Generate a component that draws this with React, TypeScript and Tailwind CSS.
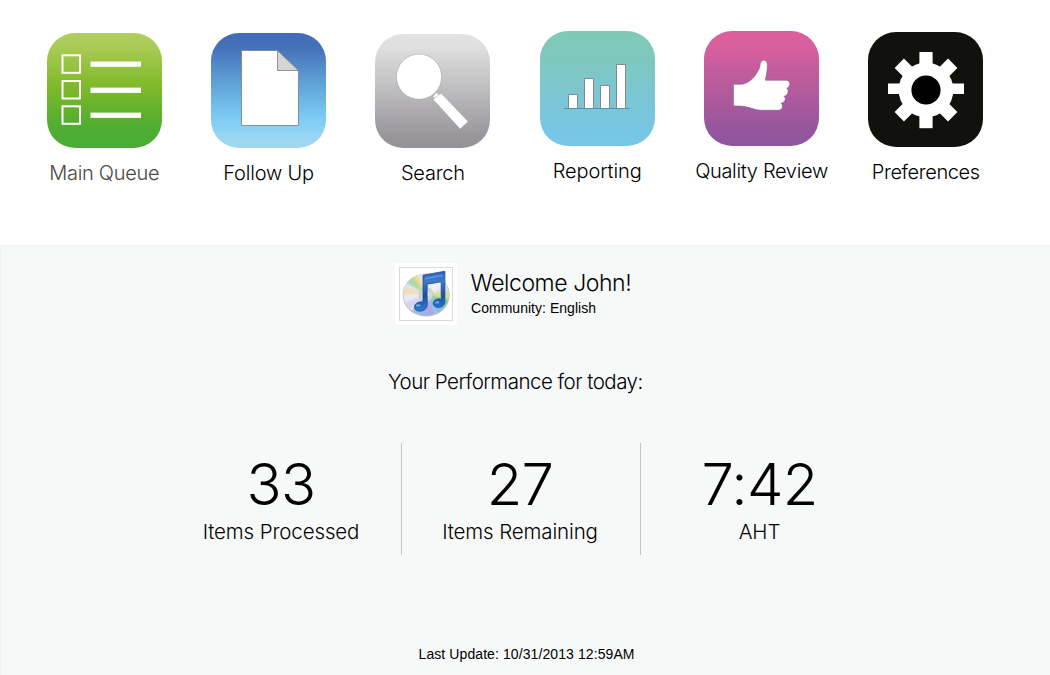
import type { ReactNode } from "react";

type Tile = {
  id: string;
  label: string;
  stops: [string, string][];
  height: number;
  column: string;
  text: string;
  glyph: ReactNode;
};

const tiles: Tile[] = [
  {
    id: "queue",
    label: "Main Queue",
    stops: [["0", "#b1ce5f"], ["0.12", "#a9cb55"], ["0.47", "#7fb928"], ["0.8", "#50ae32"], ["1", "#4aac34"]],
    height: 115,
    column: "pt-[33px]",
    text: "text-[#4a4745] tracking-[-0.3px]",
    glyph: (
      <>
        <g fill="none" stroke="#fff" strokeWidth="2">
          <rect x="15.5" y="22.3" width="17.5" height="17.5" />
          <rect x="15.5" y="48" width="17.5" height="17.5" />
          <rect x="15.5" y="73.3" width="17.5" height="17.5" />
        </g>
        <g fill="#fff">
          <rect x="43.5" y="28.5" width="50.5" height="5.3" />
          <rect x="43.5" y="54.6" width="50.5" height="5.3" />
          <rect x="43.5" y="79.6" width="50.5" height="5.3" />
        </g>
      </>
    ),
  },
  {
    id: "follow",
    label: "Follow Up",
    stops: [["0", "#426cb5"], ["0.12", "#4470b8"], ["0.4", "#5c9cd4"], ["0.74", "#7cccf5"], ["0.9", "#97d6f2"], ["1", "#a0d8ef"]],
    height: 115,
    column: "pt-[33px]",
    text: "text-black tracking-[-0.2px]",
    glyph: (
      <g stroke="#777b80" strokeWidth="0.8">
        <path d="M30.5 17.5H66.8L87.5 38.5V92.5H30.5Z" fill="#fff" />
        <path d="M66.5 17.5V37.5H87.5Z" fill="#d5d5d5" />
      </g>
    ),
  },
  {
    id: "search",
    label: "Search",
    stops: [["0", "#e2e2e2"], ["0.12", "#dfdfdf"], ["0.6", "#b4b2b5"], ["0.9", "#98969b"], ["1", "#949297"]],
    height: 114,
    column: "pt-[34px]",
    text: "text-black tracking-[-0.2px]",
    glyph: (
      <g fill="#fff" stroke="#98989a" strokeWidth="0.5">
        <circle cx="44" cy="42.7" r="22.6" />
        <path d="M57.8 62.4L61.6 58.6L64.6 61.4L60.4 65.3Z" />
        <path d="M58 65.4L66 59L93.2 87.4L85.2 95.1Z" />
      </g>
    ),
  },
  {
    id: "reporting",
    label: "Reporting",
    stops: [["0", "#80c8b6"], ["0.15", "#80c8b9"], ["0.5", "#7cc6cf"], ["0.85", "#78c6e4"], ["1", "#77c7e9"]],
    height: 115,
    column: "pt-[31px]",
    text: "text-black tracking-[-0.1px]",
    glyph: (
      <g fill="#fff" stroke="#86888b" strokeWidth="1">
        <path d="M28.5 77.5V63.5H37.5V77.5" />
        <path d="M44.5 77.5V47.5H53.5V77.5" />
        <path d="M60.5 77.5V54.5H69.5V77.5" />
        <path d="M76.5 77.5V33.5H85.5V77.5" />
        <path d="M24 77.5H90" stroke="#5d8f9c" />
      </g>
    ),
  },
  {
    id: "quality",
    label: "Quality Review",
    stops: [["0", "#dc5f9d"], ["0.12", "#d95f9d"], ["0.5", "#b65b9c"], ["0.85", "#96569d"], ["1", "#8e559e"]],
    height: 115,
    column: "pt-[31px]",
    text: "text-black tracking-[-0.33px]",
    glyph: (
      <path
        d="M29.5 53.3H36.5C43.5 53.3 49.5 47.5 52.5 42.5C55.5 38 56 35.5 56.4 32.5C56.9 28.3 62.5 27.8 63.2 32.5C63.9 37.5 62.2 44.5 61.4 49.3H82C86.5 49.3 87.2 55.5 82.8 57.3C85 58.8 84.6 64.2 80 65.3C82.3 67 81.6 71.2 77.2 72.1C79.3 74.3 78.8 79.2 74.5 79.2H57C49.5 79.2 44.5 75 36 75H29.5Z"
        fill="#fff"
        stroke="#7d4f83"
        strokeWidth="0.5"
      />
    ),
  },
  {
    id: "preferences",
    label: "Preferences",
    stops: [["0", "#11120d"], ["1", "#11120d"]],
    height: 115,
    column: "pt-[32px]",
    text: "text-black tracking-[-0.4px]",
    glyph: (
      <>
        <g fill="#fff">
          <circle cx="58" cy="58" r="27.4" />
          <rect x="51.4" y="20" width="13.2" height="76.2" />
          <rect x="20" y="51.5" width="76" height="10.5" />
          <rect x="51.4" y="20.2" width="13.2" height="75.6" transform="rotate(45 58 58)" />
          <rect x="51.4" y="20.2" width="13.2" height="75.6" transform="rotate(-45 58 58)" />
        </g>
        <circle cx="58" cy="58" r="14.6" fill="#000" />
      </>
    ),
  },
];

const stats = [
  { value: "33", label: "Items Processed" },
  { value: "27", label: "Items Remaining" },
  { value: "7:42", label: "AHT" },
];

function AppTile({ tile }: { tile: Tile }) {
  return (
    <div className={`flex w-[115px] flex-col items-center ${tile.column}`}>
      <svg width="115" height={tile.height} viewBox={`0 0 115 ${tile.height}`} className="block shrink-0">
        <defs>
          <linearGradient id={tile.id} x1="0" y1="0" x2="0" y2="1">
            {tile.stops.map(([offset, color]) => (
              <stop key={offset} offset={offset} stopColor={color} />
            ))}
          </linearGradient>
        </defs>
        <rect width="115" height={tile.height} rx="28" fill={`url(#${tile.id})`} />
        {tile.glyph}
      </svg>
      <span className={`mt-[13px] text-[20px] leading-6 whitespace-nowrap ${tile.text}`}>{tile.label}</span>
    </div>
  );
}

function MusicDisc() {
  return (
    <svg width="52" height="52" viewBox="0 0 52 52" className="block">
      <defs>
        <linearGradient id="disc" x1="0" y1="0" x2="1" y2="1">
          <stop offset="0" stopColor="#d9dce0" />
          <stop offset="0.5" stopColor="#f0f1f5" />
          <stop offset="1" stopColor="#b9bfd8" />
        </linearGradient>
        <linearGradient id="note" x1="0" y1="0" x2="0" y2="1">
          <stop offset="0" stopColor="#2a5bab" />
          <stop offset="0.25" stopColor="#3f7cc9" />
          <stop offset="0.6" stopColor="#1c4f9f" />
          <stop offset="1" stopColor="#2f7cd2" />
        </linearGradient>
        <clipPath id="discClip">
          <ellipse cx="26.2" cy="26.5" rx="22.9" ry="20.8" />
        </clipPath>
        <filter id="soft">
          <feGaussianBlur stdDeviation="1.3" />
        </filter>
      </defs>
      <ellipse cx="26.2" cy="27" rx="23.5" ry="21.4" fill="#b5b8be" />
      <ellipse cx="26.2" cy="26.5" rx="22.9" ry="20.8" fill="url(#disc)" />
      <g clipPath="url(#discClip)">
        <g filter="url(#soft)">
          <path d="M26 26L2 12L10 4Z" fill="#a9d8a8" />
          <path d="M26 26L9 5L15 2Z" fill="#f0d980" />
          <path d="M26 26L0 18L0 26Z" fill="#f1dcb4" />
          <path d="M26 26L1 36L7 44Z" fill="#d9d0f2" />
          <path d="M26 26L9 46L23 52Z" fill="#92b8ee" />
          <path d="M26 26L23 52L38 50Z" fill="#aaa8e8" />
          <path d="M26 26L38 48L45 42Z" fill="#7cc2ec" />
          <path d="M26 26L45 42L52 32Z" fill="#80cf9f" />
          <path d="M26 26L52 32L52 22Z" fill="#d9e08a" />
        </g>
      </g>
      <circle cx="26" cy="26.5" r="7" fill="#d5d6da" stroke="#b9bbc0" strokeWidth="0.6" />
      <circle cx="26" cy="26.5" r="2.8" fill="#fff" />
      <path
        d="M23 7.2L44.9 3.2V32C45.6 37.8 40.8 40.3 36.7 39.2C31.4 37.8 32.5 31.7 38.1 30.9C39.6 30.6 40.6 31 41.2 31.3V13.8L27.2 16.2V36.5C27.2 42 21.7 44 17.6 42.8C12.4 41.2 14 34.7 19.5 34C21 33.8 22.2 34 23 34.3Z"
        fill="url(#note)"
        stroke="#1d4c9b"
        strokeWidth="0.8"
      />
      <ellipse cx="18.2" cy="37.4" rx="2.3" ry="1.2" fill="#9bc4f4" opacity="0.7" />
      <ellipse cx="37.2" cy="34.4" rx="2.3" ry="1.2" fill="#9bc4f4" opacity="0.7" />
      <path d="M25 9.3L43 6V8.6L25 11.8Z" fill="#6eaaf0" opacity="0.5" />
    </svg>
  );
}

export default function App() {
  return (
    <main className="flex h-[675px] w-[1050px] flex-col overflow-hidden bg-white font-['Inter',sans-serif] font-[275] text-black">
      <nav className="flex h-[245px] shrink-0 items-start gap-[49.3px] pl-[46.8px]">
        {tiles.map((tile) => (
          <AppTile key={tile.id} tile={tile} />
        ))}
      </nav>
      <section className="flex flex-1 flex-col border-t border-l border-[#eff2f1] bg-[#f7f9f9]">
        <header className="mt-[17px] ml-[394px] flex h-[62px]">
          <div className="size-[62px] bg-white p-1">
            <div className="size-[54px] border border-[#d9dadb]">
              <MusicDisc />
            </div>
          </div>
          <div className="ml-[13.5px] flex flex-col">
            <h1 className="mt-[6px] text-[23px] leading-7 whitespace-nowrap tracking-[-0.43px]">Welcome John!</h1>
            <p className="mt-[2px] ml-[0.5px] font-['Liberation_Sans',sans-serif] text-[14px] leading-[18px] font-normal whitespace-nowrap tracking-[0.03px]">
              Community: English
            </p>
          </div>
        </header>
        <h2 className="mt-[45px] ml-[387px] text-[20.5px] leading-6 whitespace-nowrap tracking-[-0.52px]">
          Your Performance for today:
        </h2>
        <div className="mt-[49px] ml-[162px] grid h-[112px] w-[717px] grid-cols-3 divide-x divide-[#c4c6c6]">
          {stats.map((stat) => (
            <div key={stat.label} className="flex flex-col items-center pr-[2px]">
              <span className="mt-[9px] text-[58px] leading-[64px] font-[290] tracking-[-0.7px]">{stat.value}</span>
              <span className="mt-[4px] text-[20.5px] leading-6 whitespace-nowrap tracking-[-0.13px]">{stat.label}</span>
            </div>
          ))}
        </div>
        <p className="mt-auto mb-[12px] ml-[417.5px] font-['Liberation_Sans',sans-serif] text-[14px] leading-[18px] font-normal whitespace-nowrap tracking-[0.09px]">
          Last Update: 10/31/2013 12:59AM
        </p>
      </section>
    </main>
  );
}
